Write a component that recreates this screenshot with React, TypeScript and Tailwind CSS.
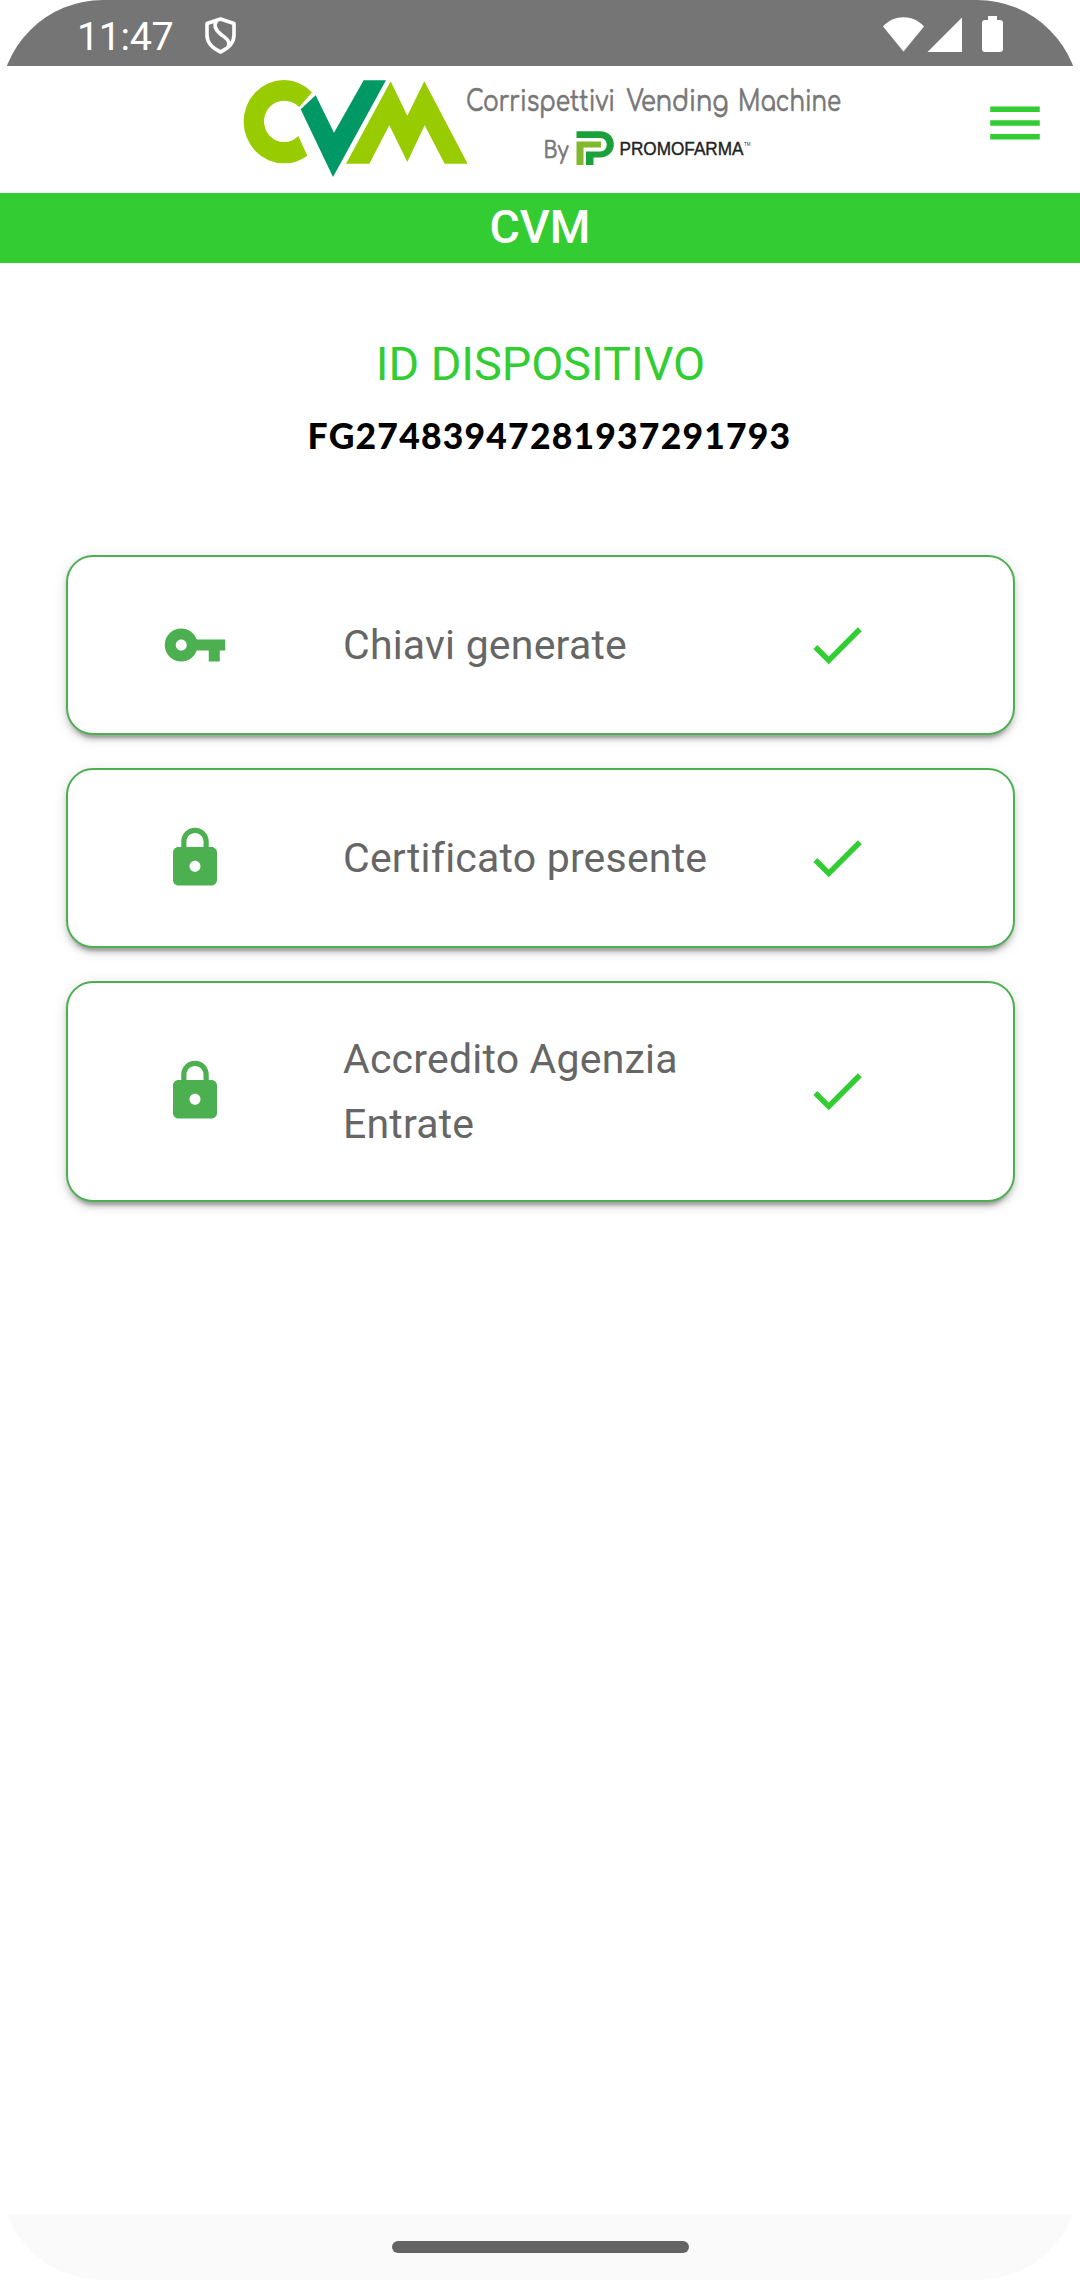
import React from "react";

const KEY =
  "M12.65 10C11.83 7.67 9.61 6 7 6c-3.31 0-6 2.69-6 6s2.69 6 6 6c2.61 0 4.83-1.67 5.65-4H17v4h4v-4h2v-4H12.65zM7 14c-1.1 0-2-.9-2-2s.9-2 2-2 2 .9 2 2-.9 2-2 2z";
const LOCK =
  "M18 8h-1V6c0-2.76-2.24-5-5-5S7 3.24 7 6v2H6c-1.1 0-2 .9-2 2v10c0 1.1.9 2 2 2h12c1.1 0 2-.9 2-2V10c0-1.1-.9-2-2-2zm-6 9c-1.1 0-2-.9-2-2s.9-2 2-2 2 .9 2 2-.9 2-2 2zm3.1-9H8.9V6c0-1.71 1.39-3.1 3.1-3.1 1.71 0 3.1 1.39 3.1 3.1v2z";
const CHECK = "M9 16.17 4.83 12l-1.42 1.41L9 19 21 7l-1.41-1.41z";
const MENU = "M3 18h18v-2H3v2zm0-5h18v-2H3v2zm0-7v2h18V6H3z";

function Icon({ d, className }: { d: string; className: string }) {
  return (
    <svg viewBox="0 0 24 24" fill="currentColor" className={`size-[66px] shrink-0 ${className}`}>
      <path d={d} />
    </svg>
  );
}

function StatusBar() {
  return (
    <div className="flex h-[66px] shrink-0 bg-[#757575] pl-[77px] text-white">
      <span className="mt-[4px] w-[96px] whitespace-nowrap text-[39.5px] leading-[66px] tracking-[-0.4px]">11:47</span>
      <svg viewBox="0 0 31 37" className="mt-[17px] ml-[32px] h-[37px] w-[31px]" fill="none" stroke="#fff" strokeWidth="3.6" strokeLinejoin="round">
        <path d="M15.500 2 29 6.500v11.500c0 7.500-5 13-13.500 17C7 31 2 25.500 2 18V6.500z" />
        <path d="M11.500 4c-3 4.500-1.500 8.500 4 13S25 23 23.500 29" />
      </svg>
      <svg viewBox="883 16 121 37" className="mt-[16px] ml-auto mr-[76px] h-[37px] w-[121px]" fill="#fff">
        <path d="M903.500 51.500 883 26.500c11-12.300 30-12.300 41 0z" />
        <path d="M962 17.500V52h-34.500z" />
        <path d="M988 16h9v4h3a3 3 0 0 1 3 3v26a3 3 0 0 1-3 3h-15a3 3 0 0 1-3-3V23a3 3 0 0 1 3-3h3z" />
      </svg>
    </div>
  );
}

function Logo() {
  return (
    <svg viewBox="230 66 620 127" className="ml-[230px] h-[127px] w-[620px]">
      <g transform="translate(230 65) scale(.33333)">
        <path
          fill="#99cc00"
          d="M246 82A121 125 0 0 0 162 45A121 125 0 0 0 41 170A121 125 0 0 0 162 295Q201 295 232 272L205 213A60 62 0 0 1 162 231A60 62 0 0 1 102 169A60 62 0 0 1 162 107Q188 107 208 126Z"
        />
        <path fill="#009966" d="M257 91 312 203 401 46H468L309 336 212 133Z" />
        <path fill="#99cc00" d="M482 49 532 152 583 49 713 296H644L584 181 532 291 478 181 418 296H348Z" />
      </g>
      <g fill="#777" stroke="#777" strokeWidth=".7" fontFamily="Comfortaa, Quicksand, Lato, sans-serif">
        <text x="466" y="110.500" fontSize="29" textLength="149" lengthAdjust="spacingAndGlyphs">Corrispettivi</text>
        <text x="626.500" y="110.500" fontSize="29" textLength="102" lengthAdjust="spacingAndGlyphs">Vending</text>
        <text x="738" y="110.500" fontSize="29" textLength="103" lengthAdjust="spacingAndGlyphs">Machine</text>
        <text x="543.500" y="158" fontSize="24" textLength="25" lengthAdjust="spacingAndGlyphs">By</text>
      </g>
      <path fill="#80b82e" d="M576.500 141.500H601V147.500H583.500V165H576.500Z" />
      <path fill="#1ba13a" d="M576.500 131.300H600C618.500 131.300 618.500 157.500 600 157.500H593.500V165H586V151.500H600C609 151.500 609 138 600 138H576.500Z" />
      <text x="619.500" y="155" fontSize="18" fill="#222" stroke="#222" strokeWidth=".4" fontFamily="'Liberation Sans', sans-serif" textLength="124" lengthAdjust="spacingAndGlyphs">PROMOFARMA</text>
      <text x="744" y="146" fontSize="4.500" fill="#333" fontFamily="'Liberation Sans', sans-serif">TM</text>
    </svg>
  );
}

const items = [
  { icon: KEY, label: "Chiavi generate", size: "h-[180px]" },
  { icon: LOCK, label: "Certificato presente", size: "h-[180px]" },
  { icon: LOCK, label: "Accredito Agenzia Entrate", size: "h-[221px]" },
];

export default function App() {
  return (
    <div className="flex h-[2280px] w-[1080px] flex-col overflow-hidden rounded-[103px] bg-white font-[Roboto,sans-serif]">
      <StatusBar />
      <header className="flex h-[127px] shrink-0 items-start">
        <Logo />
        <Icon d={MENU} className="mt-[24px] ml-[132px] text-[#32cd32]" />
      </header>
      <h1 className="h-[70px] shrink-0 bg-[#33cd33] text-center text-[46.5px] leading-[68px] font-medium text-white">CVM</h1>
      <main className="flex grow flex-col pr-[65px] pl-[66px] pt-[68px]">
        <h2 className="h-[66px] text-center text-[46.7px] leading-[66px] text-[#32cd32]">ID DISPOSITIVO</h2>
        <p className="mt-[11px] h-[56px] pl-[18px] text-center font-[Lato,sans-serif] text-[35.5px] leading-[56px] font-black tracking-[1.2px] text-black">
          FG27483947281937291793
        </p>
        <div className="mt-[91px] flex flex-col gap-[33px]">
          {items.map((item) => (
            <section
              key={item.label}
              className={`flex items-center rounded-[27px] border-2 border-[#4caf50] bg-white pl-[93.5px] shadow-[0_8px_3px_-5px_rgba(0,0,0,0.2),0_5px_5px_0_rgba(0,0,0,0.14),0_3px_14px_0_rgba(0,0,0,0.12)] ${item.size}`}
            >
              <Icon d={item.icon} className="mb-[1px] text-[#4caf50]" />
              <p className="ml-[115.5px] w-[400px] text-[41px] leading-[65px] tracking-[0.2px] text-[#666]">{item.label}</p>
              <Icon d={CHECK} className="mb-[1px] ml-[61px] text-[#32cd32]" />
            </section>
          ))}
        </div>
      </main>
      <footer className="flex h-[66px] shrink-0 justify-center bg-[#fafafa] pt-[27px]">
        <div className="h-[12px] w-[297px] rounded-full bg-[#646464]" />
      </footer>
    </div>
  );
}
